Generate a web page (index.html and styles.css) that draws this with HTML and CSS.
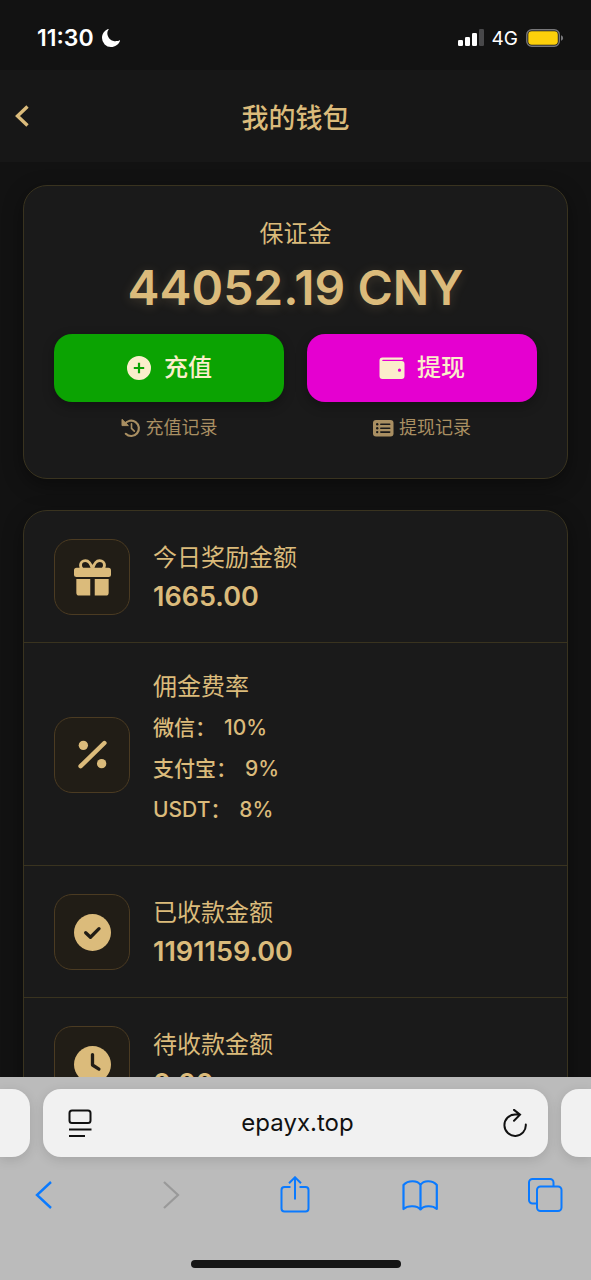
FILE: index.html
```html
<!DOCTYPE html>
<html lang="zh-CN">
<head>
<meta charset="utf-8">
<meta name="viewport" content="width=device-width, initial-scale=1">
<title>我的钱包</title>
<link rel="stylesheet" href="styles.css">
</head>
<body>
<div class="status-bar">
  <div class="status-group">
    <span class="clock">11:30</span>
    <svg width="18" height="18" viewBox="0 0 18 18" aria-hidden="true"><path d="M6.600.4C5.200 2.200 5 4.300 5.700 6.400c1.300 3.900 5 6.200 9 5.700 1-.1 1.800-.3 2.600-.7.500-.2.9.1.7.6-1.500 3.600-4.900 6-8.900 6A9 9 0 0 1 0 9C0 5.100 2.400 1.500 6 .1c.5-.2.8 0 .6.300z" fill="#fff"/></svg>
  </div>
  <div class="status-group">
    <svg width="26" height="18" viewBox="0 0 26 18" aria-hidden="true"><g fill="#fff"><rect x="0" y="11" width="5" height="6" rx="1.300"/><rect x="7" y="8" width="5" height="9" rx="1.300"/><rect x="14" y="4" width="5" height="13" rx="1.300"/></g><rect x="21" y="0" width="5" height="17" rx="1.300" fill="#48484a"/></svg>
    <span class="network">4G</span>
    <svg width="38" height="18" viewBox="0 0 38 18" aria-hidden="true"><rect x=".8" y=".8" width="32.500" height="16.400" rx="5" fill="none" stroke="#77777a" stroke-width="1.400"/><rect x="2.300" y="2.300" width="29.500" height="13.400" rx="3.400" fill="#fdd00b"/><path d="M35 6.200c1.300.5 2.100 1.500 2.100 2.800S36.300 11.300 35 11.800z" fill="#77777a"/></svg>
  </div>
</div>

<header class="page-header">
  <button class="back" type="button" aria-label="返回"><svg width="16" height="24" viewBox="0 0 16 24"><path d="M12.500 2.500 2.500 12l10 9.500" fill="none" stroke="currentColor" stroke-width="3.400"/></svg></button>
  <h1 class="page-title">我的钱包</h1>
</header>

<main class="content">
  <section class="card balance">
    <h2 class="balance-label">保证金</h2>
    <p class="balance-amount">44052.19 CNY</p>
    <div class="actions">
      <div class="action">
        <button class="action-button deposit" type="button">
          <svg width="26" height="26" viewBox="0 0 26 26" aria-hidden="true"><path fill-rule="evenodd" d="M13 1a12 12 0 1 1 0 24 12 12 0 0 1 0-24zm-1.100 6.800v4.100H7.800v2.200h4.100v4.100h2.200v-4.100h4.100v-2.200h-4.100V7.800z" fill="currentColor"/></svg>
          充值
        </button>
        <a class="record" href="#deposits">
          <svg width="20" height="20" viewBox="0 0 20 20" aria-hidden="true"><path d="M3.600 6.300A7.700 7.700 0 1 1 4.800 15.800" fill="none" stroke="currentColor" stroke-width="2.200" stroke-linecap="round"/><path d="M1 1.300v6.300h6.400z" fill="currentColor" stroke="currentColor" stroke-width="1" stroke-linejoin="round"/><path d="M10.500 5.800v4.500l2.800 2.800" fill="none" stroke="currentColor" stroke-width="1.600" stroke-linecap="round"/></svg>
          充值记录
        </a>
      </div>
      <div class="action">
        <button class="action-button withdraw" type="button">
          <svg width="26" height="26" viewBox="0 0 26 26" aria-hidden="true"><path fill-rule="evenodd" d="M3.500 2.500h19.500a1.100 1.100 0 0 1 0 2.200H4c-1 0-1 1.400 0 1.400H22.500a3 3 0 0 1 3 3V21a3 3 0 0 1-3 3H3.500a3 3 0 0 1-3-3V5.500a3 3 0 0 1 3-3zM20.500 13.600a1.600 1.600 0 1 0 0 3.200 1.600 1.600 0 0 0 0-3.200z" fill="currentColor"/></svg>
          提现
        </button>
        <a class="record" href="#withdrawals">
          <svg width="21" height="20" viewBox="0 0 21 20" aria-hidden="true"><rect x="0" y="2" width="20.500" height="16.500" rx="3" fill="currentColor"/><g fill="#1a1a1a"><circle cx="4.200" cy="6.300" r="1.200"/><circle cx="4.200" cy="10.200" r="1.200"/><circle cx="4.200" cy="14.100" r="1.200"/><rect x="7" y="5.500" width="10.500" height="1.600" rx=".8"/><rect x="7" y="9.400" width="10.500" height="1.600" rx=".8"/><rect x="7" y="13.300" width="10.500" height="1.600" rx=".8"/></g></svg>
          提现记录
        </a>
      </div>
    </div>
  </section>

  <section class="card stats">
    <div class="stat">
      <span class="stat-icon"><svg width="37" height="37" viewBox="0 0 38 38" aria-hidden="true"><path d="M19 10.500C17.500 5 15.500 1.700 11.700 1.700c-3 0-5 2-5 4.600 0 1.600.6 2.800 1.700 4.200M19 10.500c1.500-5.500 3.500-8.800 7.300-8.800 3 0 5 2 5 4.600 0 1.600-.6 2.800-1.700 4.200" fill="none" stroke="currentColor" stroke-width="3"/><rect x="0" y="9" width="38" height="9.600" rx="2.600" fill="currentColor"/><path d="M2.400 20.600h14.300v17H5.400a3 3 0 0 1-3-3zM21.300 20.600h14.300v14a3 3 0 0 1-3 3H21.300z" fill="currentColor"/></svg></span>
      <div class="stat-text">
        <h3 class="stat-label">今日奖励金额</h3>
        <p class="stat-value">1665.00</p>
      </div>
    </div>
    <div class="stat">
      <span class="stat-icon"><svg width="37" height="37" viewBox="0 0 38 38" aria-hidden="true"><path d="M6.800 31 31.200 7.200" stroke="currentColor" stroke-width="4.600" stroke-linecap="round"/><circle cx="9.600" cy="9.600" r="4.800" fill="currentColor"/><circle cx="28.400" cy="28.400" r="4.800" fill="currentColor"/></svg></span>
      <div class="stat-text">
        <h3 class="stat-label">佣金费率</h3>
        <ul class="rates">
          <li class="rate"><span>微信：</span><span>10%</span></li>
          <li class="rate"><span>支付宝：</span><span>9%</span></li>
          <li class="rate"><span>USDT：</span><span>8%</span></li>
        </ul>
      </div>
    </div>
    <div class="stat">
      <span class="stat-icon"><svg width="37" height="37" viewBox="0 0 38 38" aria-hidden="true"><circle cx="19" cy="19" r="19" fill="currentColor"/><path d="m12 19.200 4.900 4.700 8.800-8.800" fill="none" stroke="#211d16" stroke-width="3.400" stroke-linecap="round" stroke-linejoin="round"/></svg></span>
      <div class="stat-text">
        <h3 class="stat-label">已收款金额</h3>
        <p class="stat-value">1191159.00</p>
      </div>
    </div>
    <div class="stat">
      <span class="stat-icon"><svg width="37" height="37" viewBox="0 0 38 38" aria-hidden="true"><circle cx="19" cy="19" r="19" fill="currentColor"/><path d="M19 8.800V19.500l6.600 4.200" fill="none" stroke="#211d16" stroke-width="3.400" stroke-linecap="round" stroke-linejoin="round"/></svg></span>
      <div class="stat-text">
        <h3 class="stat-label">待收款金额</h3>
        <p class="stat-value">0.00</p>
      </div>
    </div>
  </section>
</main>

<footer class="browser">
  <div class="tabs">
    <div class="tab side-left"></div>
    <div class="tab address">
      <button class="tool" type="button" aria-label="页面设置"><svg width="24" height="28" viewBox="0 0 24 28" fill="none" stroke="currentColor" stroke-width="2"><rect x="1.500" y="1.500" width="21" height="12.500" rx="2.500"/><path d="M1 20.500h22.500M1 27h16"/></svg></button>
      <input class="url" type="text" value="epayx.top" aria-label="网址">
      <button class="tool" type="button" aria-label="刷新"><svg width="24" height="28" viewBox="0 0 24 28" fill="none" stroke="currentColor" stroke-width="2" stroke-linecap="round"><path d="M22.800 15.500A10.700 10.700 0 1 1 12 5.500h5M11 .9 17 5.700l-6 6"/></svg></button>
    </div>
    <div class="tab side-right"></div>
  </div>
  <nav class="toolbar">
    <button class="tool" type="button" aria-label="后退"><svg width="36" height="38" viewBox="0 0 36 38" fill="none" stroke="currentColor" stroke-width="2.400"><path d="M26 6 12 19l14 13"/></svg></button>
    <button class="tool" type="button" aria-label="前进" disabled><svg width="36" height="38" viewBox="0 0 36 38" fill="none" stroke="currentColor" stroke-width="2.200"><path d="M13 6 27 19 13 32"/></svg></button>
    <button class="tool" type="button" aria-label="分享"><svg width="36" height="38" viewBox="0 0 36 38" fill="none" stroke="currentColor" stroke-width="2"><path d="M14.500 11H8.500a3 3 0 0 0-3 3v18.500a3 3 0 0 0 3 3h21a3 3 0 0 0 3-3V14a3 3 0 0 0-3-3h-6M19 23.500V1.500M13 7.300l6-6 6 6"/></svg></button>
    <button class="tool" type="button" aria-label="书签"><svg width="36" height="38" viewBox="0 0 36 38" fill="none" stroke="currentColor" stroke-width="2.200" stroke-linejoin="round"><path d="M18.500 9v24.500C15.500 29.500 6 29 1.500 33V9C6 4 15.500 4 18.500 9c3-5 12-5 16.300 0v24c-4.300-4-13.300-3.500-16.300.5"/></svg></button>
    <button class="tool" type="button" aria-label="标签页"><svg width="36" height="38" viewBox="0 0 36 38" fill="none" stroke="currentColor" stroke-width="2"><rect x="10" y="10.500" width="24.500" height="24.500" rx="3.500"/><path d="M10 27.500H5.500A3.500 3.500 0 0 1 2 24V6.500A3.500 3.500 0 0 1 5.500 3H23a3.500 3.500 0 0 1 3.500 3.500v4"/></svg></button>
  </nav>
  <div class="home-indicator"></div>
</footer>
</body>
</html>
```
FILE: styles.css
```css
* {
  box-sizing: border-box;
}

:root {
  --gold: #dbbb7b;
  --gold-dim: #a98f62;
  --line: #39331f;
  --panel: #1a1a1a;
}

body {
  margin: 0;
  height: 100vh;
  display: flex;
  flex-direction: column;
  overflow: hidden;
  background: #121212;
  color: var(--gold);
  font-family: Inter, "Noto Sans CJK SC", sans-serif;
}

h1, h2, h3, p, ul {
  margin: 0;
  padding: 0;
  font-weight: 400;
  list-style: none;
}

button {
  border: 0;
  padding: 0;
  background: none;
  color: inherit;
  font: inherit;
  cursor: pointer;
}

svg {
  display: block;
  flex: none;
}

.status-bar {
  flex: none;
  height: 70px;
  padding: 6px 27px 0 37px;
  display: flex;
  align-items: center;
  justify-content: space-between;
  background: #121212;
  color: #fff;
}

.status-group {
  display: flex;
  align-items: center;
  gap: 8px;
}

.clock {
  font-size: 23px;
  font-weight: 600;
}

.network {
  font-size: 19px;
  font-weight: 400;
}

.page-header {
  flex: none;
  height: 92px;
  padding: 0 15px;
  display: grid;
  grid-template-columns: 1fr auto 1fr;
  align-items: center;
  background: #171717;
}

.back {
  justify-self: start;
}

.page-title {
  font-size: 27px;
  font-weight: 500;
}

.content {
  flex: 1;
  min-height: 0;
  overflow: auto;
  scrollbar-width: none;
  padding: 23px;
  display: flex;
  flex-direction: column;
  gap: 31px;
}

.card {
  flex: none;
  border: 1px solid var(--line);
  border-radius: 24px;
  background: var(--panel);
  box-shadow: 0 6px 20px rgba(0, 0, 0, 0.4);
}

.balance {
  padding: 32px 30px 36px;
  text-align: center;
}

.balance-label {
  font-size: 24px;
  line-height: 32px;
}

.balance-amount {
  padding-top: 7px;
  font-size: 48px;
  font-weight: 600;
  line-height: 62px;
  text-shadow: 0 2px 12px rgba(219, 187, 123, 0.2);
}

.actions {
  padding-top: 15px;
  display: grid;
  grid-template-columns: 1fr 1fr;
  gap: 23px;
}

.action {
  display: flex;
  flex-direction: column;
  align-items: center;
  gap: 12px;
}

.action-button {
  width: 100%;
  height: 68px;
  border-radius: 18px;
  display: flex;
  align-items: center;
  justify-content: center;
  gap: 12px;
  color: #fbeecb;
  font-size: 24px;
  font-weight: 500;
  line-height: 32px;
  box-shadow: 0 4px 12px rgba(0, 0, 0, 0.3);
}

.deposit {
  background: #0ba302;
}

.withdraw {
  background: #e500d0;
}

.record {
  display: flex;
  align-items: center;
  gap: 5px;
  color: var(--gold-dim);
  font-size: 18px;
  line-height: 28px;
  text-decoration: none;
}

.stat {
  padding: 28px 30px 27px;
  display: flex;
  align-items: center;
  gap: 23px;
}

.stat + .stat {
  border-top: 1px solid var(--line);
}

.stat-icon {
  flex: none;
  width: 76px;
  height: 76px;
  border: 1px solid #4b3b22;
  border-radius: 18px;
  background: #211d16;
  display: flex;
  align-items: center;
  justify-content: center;
}

.stat-text {
  display: flex;
  flex-direction: column;
  gap: 7px;
}

.stat-label {
  font-size: 24px;
  line-height: 32px;
}

.stat-value {
  font-size: 27px;
  font-weight: 600;
  line-height: 32px;
}

.rates {
  padding-bottom: 8px;
  margin-top: -3px;
  font-size: 21px;
  font-weight: 500;
  line-height: 41px;
}

.rate {
  display: flex;
  gap: 8px;
}

.browser {
  flex: none;
  padding-top: 12px;
  background: #bbb;
  color: #111;
}

.tabs {
  display: flex;
  gap: 13px;
}

.tab {
  height: 68px;
  background: #f1f1f1;
  box-shadow: 0 3px 12px rgba(0, 0, 0, 0.12);
}

.side-left {
  width: 30px;
  border-radius: 0 18px 18px 0;
}

.side-right {
  width: 30px;
  border-radius: 18px 0 0 18px;
}

.address {
  flex: 1;
  min-width: 0;
  padding: 0 21px 0 25px;
  border-radius: 18px;
  display: flex;
  align-items: center;
}

.url {
  flex: 1;
  min-width: 0;
  border: 0;
  padding: 0;
  background: none;
  color: #111;
  font: 400 24px/32px Inter, sans-serif;
  text-align: center;
}

.toolbar {
  padding: 19px 28px 0 25px;
  display: flex;
  justify-content: space-between;
  color: #0a7aff;
}

.tool:disabled {
  color: #999;
}

.home-indicator {
  width: 210px;
  height: 8px;
  margin: 46px auto 12px;
  border-radius: 4px;
  background: #151515;
}
```
